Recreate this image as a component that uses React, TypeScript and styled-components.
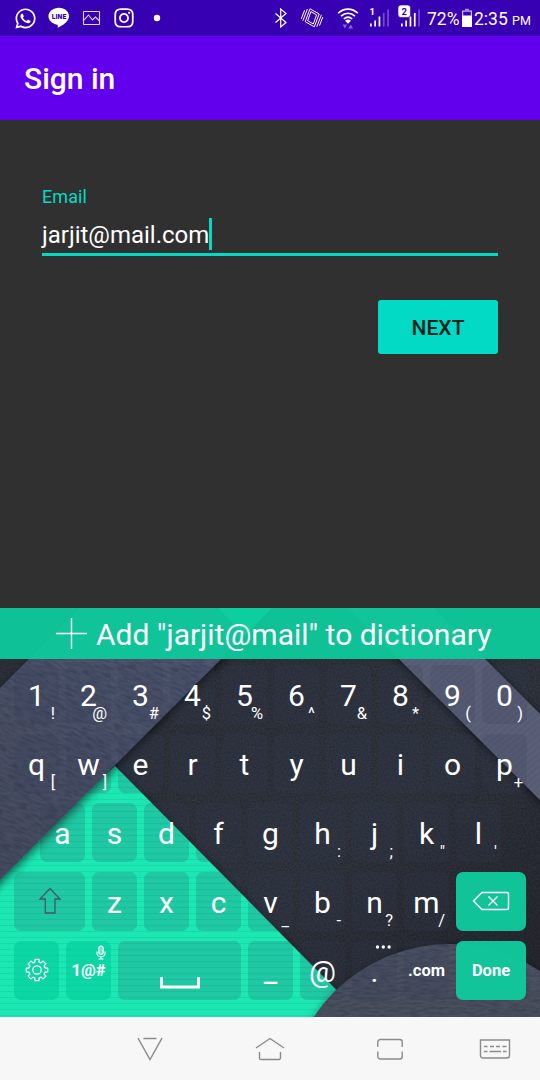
import React from "react";
import styled, { createGlobalStyle } from "styled-components";
import { FaInstagram, FaWhatsapp } from "react-icons/fa";

const GlobalStyle = createGlobalStyle`
  * { box-sizing: border-box; }
  body { margin: 0; font-family: Roboto, sans-serif; background: #303030; }
`;

const Screen = styled.div`
  width: 540px;
  height: 1080px;
  display: flex;
  flex-direction: column;
  overflow: hidden;
  background: #303030;
`;

const StatusBar = styled.header`
  height: 36px;
  flex: none;
  display: flex;
  align-items: center;
  justify-content: space-between;
  padding-left: 14px;
  background: #3700b3;
  color: #fff;
`;

const StatusGroup = styled.div<{ $w?: number }>`
  width: ${(p) => (p.$w ? `${p.$w}px` : "auto")};
  display: flex;
  align-items: center;
  height: 36px;
  svg { flex: none; display: block; }
`;

const StatusText = styled.span<{ $w: number; $small?: boolean }>`
  width: ${(p) => p.$w}px;
  flex: none;
  font-size: ${(p) => (p.$small ? 12.5 : 17.5)}px;
  line-height: 30px;
  white-space: pre;
  padding-top: ${(p) => (p.$small ? 5 : 2)}px;
`;

const Spacer = styled.i<{ $w: number }>`
  width: ${(p) => p.$w}px;
  flex: none;
`;

const AppBar = styled.div`
  height: 84px;
  flex: none;
  display: flex;
  align-items: center;
  padding: 0 24px;
  background: #6200ee;
`;

const Title = styled.h1`
  margin: 0;
  color: #fff;
  font-size: 30px;
  font-weight: 460;
`;

const Form = styled.main`
  height: 488px;
  flex: none;
  padding: 65px 42px 0;
  display: flex;
  flex-direction: column;
`;

const Label = styled.label`
  color: #03dac5;
  font-size: 18px;
  line-height: 22px;
  letter-spacing: 0.1px;
  padding-top: 1px;
`;

const Field = styled.div`
  height: 48px;
  display: flex;
  align-items: center;
  border-bottom: 3px solid #03dac5;
  color: #fff;
  font-size: 24px;
  padding-top: 8px;
`;

const Caret = styled.i`
  width: 3px;
  height: 32px;
  margin-bottom: 1px;
  background: #03dac5;
`;

const NextButton = styled.button`
  align-self: flex-end;
  width: 120px;
  height: 54px;
  margin-top: 44px;
  padding: 2px 0 0;
  border: 0;
  border-radius: 3px;
  background: #03dac5;
  color: #04211e;
  font: 460 21px Roboto, sans-serif;
  letter-spacing: 0.1px;
`;

const Keyboard = styled.section`
  position: relative;
  height: 409px;
  flex: none;
  overflow: hidden;
  background: #282b33;
`;

const Wallpaper = styled.svg`
  position: absolute;
  inset: 0;
`;

const KeyboardContent = styled.div`
  position: relative;
  display: flex;
  flex-direction: column;
`;

const Suggestion = styled.div`
  height: 51px;
  display: flex;
  align-items: center;
  padding-left: 55px;
  gap: 8px;
  background: rgba(13, 203, 156, 0.94);
  color: #fff;
  font-size: 30px;
  white-space: pre;
  span { padding-top: 1px; }
`;

const Rows = styled.div`
  padding: 6px 0 0 14px;
  display: flex;
  flex-direction: column;
  gap: 10px;
`;

const Row = styled.div<{ $indent?: boolean }>`
  display: flex;
  gap: 7px;
  height: 59px;
  padding-left: ${(p) => (p.$indent ? 26 : 0)}px;
`;

type Tone = "plain" | "soft" | "solid";
const tones: Record<Tone, string> = {
  plain: "rgba(52, 62, 88, 0.18)",
  soft: "rgba(2, 204, 155, 0.6)",
  solid: "rgba(15, 200, 156, 0.97)",
};

const Key = styled.div<{ $w?: number; $tone?: Tone; $label?: boolean }>`
  position: relative;
  width: ${(p) => p.$w ?? 45}px;
  height: 59px;
  flex: none;
  display: flex;
  align-items: center;
  justify-content: center;
  border-radius: 7px;
  background: ${(p) => tones[p.$tone ?? "plain"]};
  color: #fff;
  font-size: ${(p) => (p.$label ? 16.5 : 30)}px;
  font-weight: ${(p) => (p.$label ? 700 : 400)};
  line-height: 59px;
  padding-top: ${(p) => (p.$label ? 0 : 2)}px;
`;

const Alt = styled.span`
  position: absolute;
  right: 4px;
  bottom: 0;
  font-size: 16.5px;
  font-weight: 400;
  line-height: 20px;
`;

const Corner = styled.span`
  position: absolute;
  right: 5px;
  top: 4px;
  display: flex;
`;

const NavBar = styled.nav`
  height: 63px;
  flex: none;
  display: grid;
  grid-template-columns: 90px 120px 120px 120px 90px;
  align-items: center;
  justify-items: center;
  background: #f7f7f7;
`;

const Stroke = styled.svg`
  display: block;
  fill: none;
  stroke: currentColor;
`;

const KeyIcon = styled(Stroke)`
  margin-top: -4px;
`;

const SpaceIcon = styled(Stroke)`
  margin-top: 23px;
`;

const NavIcon = styled(Stroke)`
  width: 32px;
  height: 28px;
  color: #8b8b8b;
  stroke-width: 1.4;
`;

function LineIcon() {
  return (
    <svg width="22" height="22" viewBox="0 0 22 22">
      <path fill="#fff" d="M11 .8C5.1.8.5 4.500 .5 9.300c0 4.200 3.700 7.600 8.700 8.400.7.2.7.8.4 3.100 4.500-2.100 11.400-6 11.400-11.500C21 4.500 16.800.8 11 .8z" />
      <text x="11" y="12" textAnchor="middle" fill="#3700b3" fontFamily="Roboto, sans-serif" fontWeight="900" fontSize="7.400" textLength="14.500" lengthAdjust="spacingAndGlyphs">LINE</text>
    </svg>
  );
}

function Signal({ sim, full, badge }: { sim: string; full: number; badge?: boolean }) {
  return (
    <svg width="24" height="28" viewBox="0 0 24 28">
      {[0, 1, 2, 3, 4].map((i) => {
        const h = [3, 6, 10, 13.500, 17][i];
        return <rect key={i} x={4 + i * 4.300} y={22.500 - h} width="1.700" height={h} fill="#fff" opacity={i < full ? 1 : 0.3} />;
      })}
      {badge && <rect x="1" y="1" width="12.500" height="12.500" rx="3" fill="#fff" stroke="#3700b3" strokeWidth=".6" />}
      <text x={badge ? 7.200 : 6.300} y="10.500" textAnchor="middle" fontFamily="Roboto, sans-serif" fontWeight="700" fontSize="9.500" fill={badge ? "#3700b3" : "#fff"}>{sim}</text>
    </svg>
  );
}

function Status() {
  return (
    <StatusBar>
      <StatusGroup>
        <FaWhatsapp size={23} />
        <Spacer $w={11} />
        <LineIcon />
        <Spacer $w={12} />
        <Stroke width="19" height="16" viewBox="0 0 19 16" opacity=".85">
          <rect x="1.500" y="1.500" width="16" height="13" rx=".5" strokeWidth="1.100" />
          <path strokeWidth="1.100" d="M2 10.200 6.500 5l4 5 3-3 4 4" />
        </Stroke>
        <Spacer $w={12} />
        <FaInstagram size={22} />
        <Spacer $w={18} />
        <svg width="8" height="8"><circle cx="4" cy="4" r="3.200" fill="#fff" /></svg>
      </StatusGroup>
      <StatusGroup $w={266}>
        <Stroke width="14" height="20" viewBox="0 0 14 20" strokeWidth="1.200">
          <path d="M1.500 5.500 12 14.500 6.700 19V1L12 5.500 1.500 14.500" />
        </Stroke>
        <Spacer $w={12} />
        <Stroke width="24" height="22" viewBox="0 0 24 22" strokeWidth="1" strokeLinejoin="round">
          <path d="M10 1.800 19.200 7 14.300 19.800 5.200 14.700z" />
          <path d="M10.900 4.600 16.600 7.900 13.300 17 7.700 13.700z" />
          <path d="M7.400 2 2.800 13.800M4.600 3.200 1.300 11.800M16.800 19.800l4.600-12M19.500 18.600l3.300-8.600" />
        </Stroke>
        <Spacer $w={13} />
        <Stroke width="22" height="22" viewBox="0 0 22 22" strokeWidth="1.600">
          <path d="M1.200 6.200c5.700-5.500 13.900-5.500 19.600 0M4 9.200c4.100-3.900 9.900-3.900 14 0M6.800 12c2.600-2.400 5.800-2.400 8.400 0" />
          <path fill="#fff" stroke="none" d="M8 13.700c1.800-1.500 4.200-1.500 6 0L11 16.800z" />
          <path fill="#fff" opacity=".4" stroke="none" d="M5.500 17.500h4.800l-2.400 4zM11.300 21.500h4.800l-2.400-4z" />
        </Stroke>
        <Spacer $w={7} />
        <Signal sim="1" full={3} />
        <Spacer $w={7} />
        <Signal sim="2" full={4} badge />
        <Spacer $w={6} />
        <StatusText $w={32}>72%</StatusText>
        <Spacer $w={2} />
        <svg width="12" height="20" viewBox="0 0 12 20">
          <path fill="#fff" opacity=".6" d="M4 .8h4v1.500H4z" />
          <rect x="1.600" y="3.100" width="8.800" height="15.300" fill="none" stroke="#fff" strokeWidth="1.200" opacity=".75" />
          <path fill="#fff" d="M1 7.500h10v11.500H1z" />
        </svg>
        <Spacer $w={1} />
        <StatusText $w={38}>2:35</StatusText>
        <StatusText $w={21} $small>PM</StatusText>
      </StatusGroup>
    </StatusBar>
  );
}

function KeyboardWallpaper() {
  return (
    <Wallpaper width="540" height="409" viewBox="0 608 540 409">
      <defs>
        <linearGradient id="slate" x1="0" y1="0" x2="1" y2="1">
          <stop offset="0" stopColor="#2e313a" />
          <stop offset=".6" stopColor="#31353f" />
          <stop offset="1" stopColor="#24262c" />
        </linearGradient>
        <linearGradient id="band" x1="0" y1="1" x2="1" y2="0">
          <stop offset="0" stopColor="#434a5c" />
          <stop offset="1" stopColor="#525872" />
        </linearGradient>
        <linearGradient id="disc" x1="0" y1="0" x2="0" y2="1">
          <stop offset="0" stopColor="#4d5262" />
          <stop offset=".25" stopColor="#484e5b" />
        </linearGradient>
        <pattern id="lines" width="8" height="6" patternUnits="userSpaceOnUse">
          <rect width="8" height="6" fill="#1be6b2" />
          <path d="M0 1.500h8" stroke="#19dba9" strokeWidth="1" />
          <path d="M0 4.500h8" stroke="#1de9b6" strokeWidth="1" />
        </pattern>
        <pattern id="ribs" width="5" height="5" patternUnits="userSpaceOnUse" patternTransform="rotate(-40)">
          <rect width="5" height="5" fill="#575c73" />
          <path d="M0 1h5" stroke="#5e637a" strokeWidth="1.200" />
        </pattern>
        <filter id="shade" x="-20%" y="-20%" width="140%" height="140%">
          <feDropShadow dx="1" dy="3" stdDeviation="5" floodColor="#000" floodOpacity=".6" />
        </filter>
        <filter id="leather" x="0" y="0" width="100%" height="100%" colorInterpolationFilters="sRGB">
          <feTurbulence type="fractalNoise" baseFrequency=".1 .4" numOctaves="2" seed="4" />
          <feColorMatrix values="0 0 0 0 .12  0 0 0 0 .14  0 0 0 0 .22  0 2.500 0 0 -1" />
        </filter>
        <filter id="grain" x="0" y="0" width="100%" height="100%" colorInterpolationFilters="sRGB">
          <feTurbulence type="fractalNoise" baseFrequency=".6" numOctaves="2" seed="2" />
          <feColorMatrix values="0 0 0 0 0  0 0 0 0 0  0 0 0 0 0  0 1.500 0 0 -.5" />
        </filter>
        <clipPath id="bandClip"><path d="M80 608h192L0 880V688z" /></clipPath>
        <clipPath id="discClip"><circle cx="450" cy="1108" r="164" /></clipPath>
      </defs>
      <rect y="608" width="540" height="409" fill="url(#slate)" />
      <rect y="608" width="540" height="409" filter="url(#grain)" opacity=".3" />
      <path d="M348 608h86l146 146v86z" fill="url(#ribs)" filter="url(#shade)" />
      <path d="M115 766 376 1030H-20V890z" fill="url(#lines)" filter="url(#shade)" />
      <path d="M80 608h192L-20 900V708z" fill="url(#band)" filter="url(#shade)" />
      <g clipPath="url(#bandClip)">
        <rect x="-300" y="400" width="800" height="700" transform="rotate(22 130 740)" filter="url(#leather)" opacity=".3" />
      </g>
      <path d="M218 608h54l-27 27z" fill="#1cf8c4" />
      <circle cx="450" cy="1108" r="164" fill="url(#disc)" filter="url(#shade)" />
      <g clipPath="url(#discClip)">
        <rect x="280" y="940" width="260" height="80" filter="url(#leather)" opacity=".28" />
      </g>
    </Wallpaper>
  );
}

type KeyDef = [string, string?];
const rows: KeyDef[][] = [
  [["1", "!"], ["2", "@"], ["3", "#"], ["4", "$"], ["5", "%"], ["6", "^"], ["7", "&"], ["8", "*"], ["9", "("], ["0", ")"]],
  [["q", "["], ["w", "]"], ["e"], ["r"], ["t"], ["y"], ["u"], ["i"], ["o"], ["p", "+"]],
  [["a"], ["s"], ["d"], ["f"], ["g"], ["h", ":"], ["j", ";"], ["k", "\""], ["l", "'"]],
  [["z"], ["x"], ["c"], ["v", "_"], ["b", "-"], ["n", "?"], ["m", "/"]],
];

const renderKeys = (keys: KeyDef[]) =>
  keys.map(([main, alt]) => (
    <Key key={main}>
      {main}
      {alt && <Alt>{alt}</Alt>}
    </Key>
  ));

const gearPath = (() => {
  const pts: string[] = [];
  for (let i = 0; i < 8; i++) {
    const base = (i * Math.PI) / 4 - Math.PI / 2;
    [[-0.27, 8.2], [-0.18, 10.8], [0.18, 10.8], [0.27, 8.2]].forEach(([da, r]) => {
      pts.push(`${(12 + r * Math.cos(base + da)).toFixed(2)} ${(12 + r * Math.sin(base + da)).toFixed(2)}`);
    });
  }
  return `M${pts.join("L")}Z`;
})();

export default function App() {
  return (
    <Screen>
      <GlobalStyle />
      <Status />
      <AppBar><Title>Sign in</Title></AppBar>
      <Form>
        <Label>Email</Label>
        <Field>
          <span>jarjit@mail.com</span>
          <Caret />
        </Field>
        <NextButton>NEXT</NextButton>
      </Form>
      <Keyboard>
        <KeyboardWallpaper />
        <KeyboardContent>
          <Suggestion>
            <Stroke width="33" height="33" viewBox="0 0 33 33" strokeWidth="1.400"><path d="M1 16.500h31M16.500 1v31" /></Stroke>
            <span>{'Add "jarjit@mail" to dictionary'}</span>
          </Suggestion>
          <Rows>
            <Row>{renderKeys(rows[0])}</Row>
            <Row>{renderKeys(rows[1])}</Row>
            <Row $indent>{renderKeys(rows[2])}</Row>
            <Row>
              <Key $w={71}>
                <KeyIcon width="24" height="28" viewBox="0 0 24 28" strokeWidth="1.300">
                  <path stroke="#46566b" d="M12 1.500 22 12h-5v14H7.300V12H2z" />
                </KeyIcon>
              </Key>
              {renderKeys(rows[3])}
              <Key $w={70} $tone="solid">
                <KeyIcon width="38" height="20" viewBox="0 0 38 20" strokeWidth="1.400">
                  <path d="M10 1.500h25a1.500 1.500 0 0 1 1.500 1.500v14a1.500 1.500 0 0 1-1.500 1.500H10L1.500 10z" />
                  <path d="m16.500 5.500 9 9m0-9-9 9" />
                </KeyIcon>
              </Key>
            </Row>
            <Row>
              <Key $tone="soft">
                <KeyIcon width="24" height="24" viewBox="0 0 24 24" strokeWidth="1.300" strokeLinejoin="round">
                  <path d={gearPath} />
                  <circle cx="12" cy="12" r="4.200" />
                </KeyIcon>
              </Key>
              <Key $tone="soft" $label>
                1@#
                <Corner>
                  <Stroke width="10" height="15" viewBox="0 0 10 15" strokeWidth="1.100">
                    <rect x="2.800" y="1" width="4.400" height="8.500" rx="2.200" fill="#ffffff66" />
                    <path d="M1 6.500v2a4 3.200 0 0 0 8 0v-2M5 11.500V14M2.500 14h5" />
                  </Stroke>
                </Corner>
              </Key>
              <Key $w={123}>
                <SpaceIcon width="40" height="14" viewBox="0 0 40 14" strokeWidth="2.800">
                  <path d="M1.500 1v10h37V1" />
                </SpaceIcon>
              </Key>
              <Key>_</Key>
              <Key>@</Key>
              <Key>
                .
                <Corner>
                  <svg width="18" height="5" fill="#fff"><circle cx="3.500" cy="2" r="1.700" /><circle cx="9.300" cy="2" r="1.700" /><circle cx="15.100" cy="2" r="1.700" /></svg>
                </Corner>
              </Key>
              <Key $label>.com</Key>
              <Key $w={70} $tone="solid" $label>Done</Key>
            </Row>
          </Rows>
        </KeyboardContent>
      </Keyboard>
      <NavBar>
        <i />
        <NavIcon viewBox="0 0 32 28"><path d="M4 3.200 16 24.500 28 3.200M9.500 3.500h13" /></NavIcon>
        <NavIcon viewBox="0 0 32 28"><path d="M2 13 16 3.500 30 13M5.500 17v6a1.500 1.500 0 0 0 1.500 1.500h18a1.500 1.500 0 0 0 1.500-1.500v-6" /></NavIcon>
        <NavIcon viewBox="0 0 32 28"><path d="M3.800 12V7a2.500 2.500 0 0 1 2.500-2.500h19.400A2.500 2.500 0 0 1 28.200 7v5M3.800 16.500v5A2.500 2.500 0 0 0 6.300 24h19.400a2.500 2.500 0 0 0 2.500-2.500v-5" /></NavIcon>
        <NavIcon viewBox="0 0 32 28">
          <path d="M1.500 5h29v15.500a2.500 2.500 0 0 1-2.500 2.500H4a2.500 2.500 0 0 1-2.500-2.500zM5 11.500h3.500M11 11.500h4M17 11.500h4M23.500 11.500h4M5 16.500h3.500M10.500 16.500h11.500M24 16.500h3.500" />
        </NavIcon>
      </NavBar>
    </Screen>
  );
}
